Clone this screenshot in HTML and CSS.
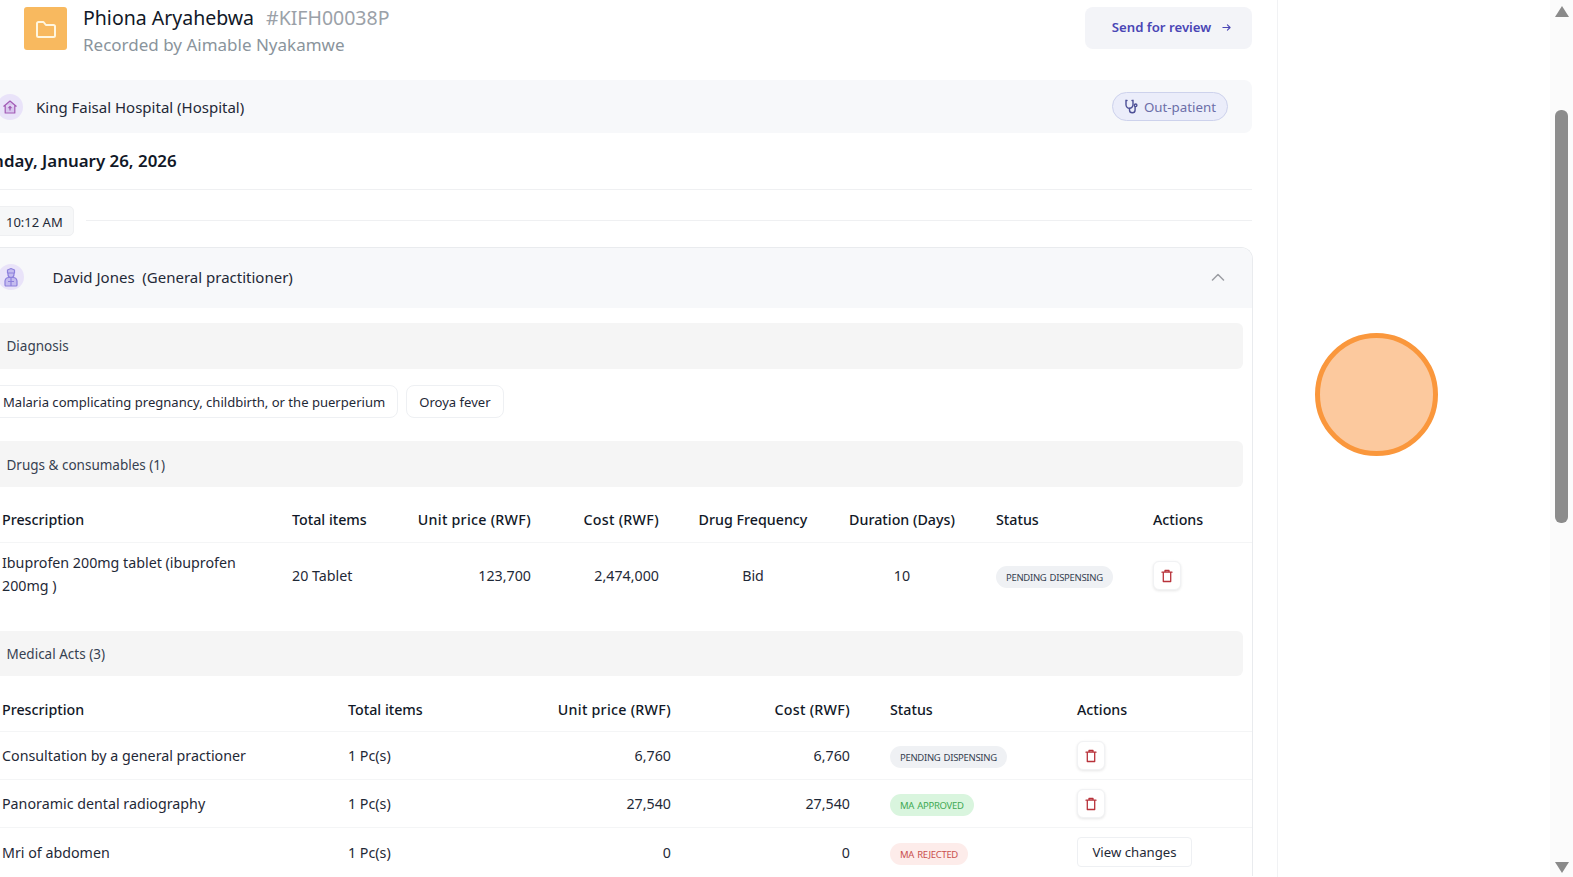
FILE: index.html
```html
<!DOCTYPE html>
<html lang="en">
<head>
<meta charset="utf-8">
<title>Patient visit</title>
<link rel="stylesheet" href="styles.css">
</head>
<body>
<div class="page">
  <main class="main">
    <div class="content">
      <header class="top">
        <div class="top-left">
          <div class="folder">
            <svg width="24" height="24" viewBox="0 0 24 24" fill="none" stroke="#fff6df" stroke-width="2" stroke-linejoin="round"><path d="M3 6.500A1.500 1.500 0 0 1 4.500 5h5l2.400 3h7.600A1.500 1.500 0 0 1 21 9.500V18.500A1.500 1.500 0 0 1 19.500 20h-15A1.500 1.500 0 0 1 3 18.500z"/></svg>
          </div>
          <div>
            <div class="name-line"><span class="name">Phiona Aryahebwa</span><span class="code">#KIFH00038P</span></div>
            <div class="recorded">Recorded by Aimable Nyakamwe</div>
          </div>
        </div>
        <button class="send">Send for review
          <svg width="9" height="9" viewBox="0 0 10 10" fill="none" stroke="#4a46b5" stroke-width="1.200" stroke-linecap="round" stroke-linejoin="round"><path d="M1 5h8M6 2l3 3-3 3"/></svg>
        </button>
      </header>

      <section class="hospital">
        <div class="hospital-left">
          <span class="avatar">
            <svg width="16" height="16" viewBox="0 0 16 16" fill="#d8c6ee" stroke="#a25bb5" stroke-width="1.200" stroke-linejoin="round"><path d="M1.500 7.500 8 2l6.500 5.500M3.200 6.500V14h9.600V6.500"/><path d="M8 11.500V7.500M6.500 9 8 7.500 9.500 9" fill="none"/></svg>
          </span>
          <span class="hospital-name">King Faisal Hospital (Hospital)</span>
        </div>
        <span class="visit-type">
          <svg width="15" height="15" viewBox="0 0 15 15" fill="none" stroke="#4c4f96" stroke-width="1.400" stroke-linecap="round"><path d="M3 1.500H2v4.200a3.500 3.500 0 0 0 7 0V1.500H8"/><path d="M5.500 9.500v1.500a2.800 2.800 0 0 0 5.600 0V8"/><circle cx="11.600" cy="6.300" r="1.300"/></svg>
          Out-patient
        </span>
      </section>

      <h2 class="date">Monday, January 26, 2026</h2>
      <hr class="date-rule">

      <div class="time-row">
        <span class="time">10:12 AM</span>
        <span class="time-rule"></span>
      </div>

      <section class="card">
        <div class="card-head">
          <div class="doctor">
            <span class="avatar">
              <svg width="16" height="20" viewBox="0 0 16 20" fill="#c5bcf0" stroke="#8d80dc" stroke-width="1.200" stroke-linejoin="round"><path d="M4.500 3 8 1.500 11.500 3v3h-7zM5 6v1.500a3 3 0 0 0 6 0V6"/><path d="M2 18v-4a4 4 0 0 1 4-3.500h4a4 4 0 0 1 4 3.500v4a1 1 0 0 1-1 1H3a1 1 0 0 1-1-1zM8 10.500V19M5 14.500h6"/></svg>
            </span>
            <span class="doctor-name">David Jones&nbsp; (General practitioner)</span>
          </div>
          <svg class="chevron" width="14" height="8" viewBox="0 0 14 8" fill="none" stroke="#9b9da3" stroke-width="1.500" stroke-linecap="round" stroke-linejoin="round"><path d="M1.500 7 7 1.500 12.500 7"/></svg>
        </div>

        <div class="bar bar-diagnosis">Diagnosis</div>
        <div class="chips">
          <span class="chip">Malaria complicating pregnancy, childbirth, or the puerperium</span>
          <span class="chip">Oroya fever</span>
        </div>

        <div class="bar bar-drugs">Drugs &amp; consumables (1)</div>
        <div class="grid drugs grid-head">
          <span>Prescription</span><span>Total items</span><span class="right">Unit price (RWF)</span><span class="right">Cost (RWF)</span><span class="center">Drug Frequency</span><span class="center">Duration (Days)</span><span class="status-cell">Status</span><span>Actions</span>
        </div>
        <div class="grid drugs drug-row">
          <span class="wrap">Ibuprofen 200mg tablet (ibuprofen 200mg )</span><span>20 Tablet</span><span class="right">123,700</span><span class="right">2,474,000</span><span class="center">Bid</span><span class="center">10</span>
          <span class="status-cell"><span class="badge pending">PENDING DISPENSING</span></span>
          <span><button class="trash"><svg width="14" height="14" viewBox="0 0 14 14" fill="none" stroke="#b8323a" stroke-width="1.300" stroke-linejoin="round" stroke-linecap="round"><path d="M2 3.200h10M3.300 3.200V12.500h7.400V3.200M5 3.200V1.500h4v1.700"/></svg></button></span>
        </div>

        <div class="bar bar-acts">Medical Acts (3)</div>
        <div class="grid acts grid-head">
          <span>Prescription</span><span>Total items</span><span class="right">Unit price (RWF)</span><span class="right">Cost (RWF)</span><span class="status-cell">Status</span><span>Actions</span>
        </div>
        <div class="grid acts act-row">
          <span>Consultation by a general practioner</span><span>1 Pc(s)</span><span class="right">6,760</span><span class="right">6,760</span>
          <span class="status-cell"><span class="badge pending">PENDING DISPENSING</span></span>
          <span><button class="trash"><svg width="14" height="14" viewBox="0 0 14 14" fill="none" stroke="#b8323a" stroke-width="1.300" stroke-linejoin="round" stroke-linecap="round"><path d="M2 3.200h10M3.300 3.200V12.500h7.400V3.200M5 3.200V1.500h4v1.700"/></svg></button></span>
        </div>
        <div class="grid acts act-row">
          <span>Panoramic dental radiography</span><span>1 Pc(s)</span><span class="right">27,540</span><span class="right">27,540</span>
          <span class="status-cell"><span class="badge approved">MA APPROVED</span></span>
          <span><button class="trash"><svg width="14" height="14" viewBox="0 0 14 14" fill="none" stroke="#b8323a" stroke-width="1.300" stroke-linejoin="round" stroke-linecap="round"><path d="M2 3.200h10M3.300 3.200V12.500h7.400V3.200M5 3.200V1.500h4v1.700"/></svg></button></span>
        </div>
        <div class="grid acts act-row last">
          <span>Mri of abdomen</span><span>1 Pc(s)</span><span class="right">0</span><span class="right">0</span>
          <span class="status-cell"><span class="badge rejected">MA REJECTED</span></span>
          <span><button class="changes">View changes</button></span>
        </div>
      </section>
    </div>
  </main>
  <aside class="side"></aside>
  <div class="scrollbar">
    <span class="arrow-up"></span>
    <span class="thumb"></span>
    <span class="arrow-down"></span>
  </div>
  <div class="pointer"></div>
</div>
</body>
</html>
```
FILE: styles.css
```css
* { box-sizing: border-box; }
html, body { margin: 0; padding: 0; height: 877px; overflow: hidden; background: #fff; }
body { font-family: "Noto Sans", "Open Sans", sans-serif; font-size: 14px; color: #1f2937; }
button { font-family: inherit; cursor: pointer; }

.page { position: relative; display: flex; width: 1573px; height: 877px; overflow: hidden; }
.main { width: 1278px; flex: none; border-right: 1px solid #f1f2f4; height: 877px; overflow: hidden; }
.content { margin-left: -24px; width: 1276px; }
.side { flex: 1; }

.top { display: flex; justify-content: space-between; padding: 7px 0 0 48px; height: 80px; }
.top-left { display: flex; gap: 16px; }
.folder { width: 43px; height: 43px; border-radius: 3px; background: #f8b95f; display: flex; align-items: center; justify-content: center; }
.name-line { display: flex; align-items: baseline; gap: 12px; margin-top: -3px; line-height: 27px; }
.name { font-size: 19.500px; color: #111827; }
.code { font-size: 19.500px; color: #9ba1a8; }
.recorded { font-size: 17px; line-height: 24px; color: #8a949c; margin-top: 2px; }
.send { width: 167px; height: 42px; border: 0; border-radius: 8px; background: #f3f4f8; color: #4a46b5; font-size: 13.200px; font-weight: 600; display: flex; align-items: center; justify-content: center; gap: 11px; padding: 0 0 2px 6px; }

.hospital { height: 53px; background: #f7f8fa; border-radius: 8px; display: flex; align-items: center; justify-content: space-between; padding: 0 24px 0 21px; }
.hospital-left { display: flex; align-items: center; gap: 13px; }
.avatar { width: 26px; height: 26px; border-radius: 50%; background: #e9e3f9; display: flex; align-items: center; justify-content: center; flex: none; }
.hospital-name { font-size: 15px; color: #1f2937; }
.visit-type { height: 29px; padding: 0 11px; border: 1px solid #cdd2ec; border-radius: 15px; background: #ebedfa; color: #6b6ea8; font-size: 13.300px; display: flex; align-items: center; gap: 5px; }

.date { margin: 0 0 0 -9px; padding-top: 16px; height: 56px; font-size: 16.900px; line-height: 24px; font-weight: 600; color: #111827; }
.date-rule { margin: 0; border: 0; border-top: 1px solid #eff0f2; }

.time-row { display: flex; align-items: center; gap: 12px; height: 30px; margin-top: 16px; }
.time { width: 98px; height: 30px; padding-left: 29px; background: #f6f7f8; border: 1px solid #eff0f2; border-radius: 5px; font-size: 13px; line-height: 30px; color: #1f2937; white-space: nowrap; }
.time-rule { flex: 1; border-top: 1px solid #eff0f2; margin-top: -2px; }

.card { margin: 11px -1px 0 0; border: 1px solid #e9ebee; border-bottom: 0; border-radius: 12px 12px 0 0; }
.card-head { height: 60px; background: #f7f8fa; border-radius: 11px 11px 0 0; display: flex; align-items: center; justify-content: space-between; padding: 0 27px 2px 21px; }
.chevron { margin-bottom: 1px; }
.doctor { display: flex; align-items: center; gap: 28.500px; }
.doctor-name { font-size: 15px; color: #1f2937; }

.bar { height: 46px; margin-right: 9px; background: #f5f5f5; border-radius: 6px; padding-left: 29.500px; font-size: 13.500px; line-height: 46px; color: #374151; }
.bar-diagnosis { margin-top: 15px; }
.bar-drugs { margin-top: 23px; line-height: 48px; }
.bar-acts { margin: 23px 9px 1px 0; height: 45px; line-height: 47px; }

.chips { display: flex; gap: 8px; margin-top: 16px; }
.chip { height: 33px; padding: 0 12px; background: #fff; border: 1px solid #eef0f3; border-radius: 8px; font-size: 13.070px; line-height: 32px; color: #1f2937; white-space: nowrap; }
.chip:first-child { padding-left: 25px; }

.grid { display: grid; align-items: center; padding-left: 25px; font-size: 14.250px; color: #1f2937; border-bottom: 1px solid #f4f5f6; }
.drugs { grid-template-columns: 290px 109px 130px 128px 188px 110px 196px 1fr; }
.acts { grid-template-columns: 346px 160px 163px 179px 227px 1fr; }
.grid-head { font-weight: 500; color: #111827; height: 55px; padding-top: 10px; }
.drugs.grid-head { height: 56px; }
.grid-head .right { letter-spacing: .25px; }
.drug-row { height: 65px; border-bottom: 0; }
.act-row { height: 48px; }
.act-row.last { border-bottom: 0; }
.wrap { line-height: 23px; padding: 0 30px 3px 0; }
.right { text-align: right; }
.center { text-align: center; }
.status-cell { padding-left: 39px; }
.acts .status-cell { padding-left: 40px; }

.badge { display: inline-block; height: 22px; margin-top: 3px; padding: 0 10px; border-radius: 11px; font-size: 9.500px; letter-spacing: -.3px; word-spacing: 1px; line-height: 23px; white-space: nowrap; vertical-align: middle; }
.pending { background: #eff1f4; color: #374151; }
.approved { background: #d9f5de; color: #3fa953; }
.rejected { background: #fdecea; color: #c9504f; }

.trash { width: 28px; height: 29px; padding: 0; background: #fff; border: 1px solid #f1f2f4; border-radius: 6px; box-shadow: 0 1px 3px rgba(0, 0, 0, .1); display: flex; align-items: center; justify-content: center; }
.changes { width: 115px; height: 30px; padding: 0; background: #fff; border: 1px solid #eef0f3; border-radius: 4px; font-size: 13.200px; color: #1f2937; }

.scrollbar { width: 23px; flex: none; background: #fbfbfb; display: flex; flex-direction: column; align-items: center; padding: 6px 0 4px 0; }
.arrow-up { width: 0; height: 0; border-left: 7px solid transparent; border-right: 7px solid transparent; border-bottom: 11px solid #8a8a8a; }
.arrow-down { width: 0; height: 0; margin-top: auto; border-left: 7px solid transparent; border-right: 7px solid transparent; border-top: 11px solid #8a8a8a; }
.thumb { width: 13px; height: 413px; margin-top: 93px; background: #8c8c8c; border-radius: 6px; }

.pointer { position: absolute; left: 1315px; top: 333px; width: 123px; height: 123px; border-radius: 50%; background: #fcc99e; border: 5.500px solid #fa973c; }
```
